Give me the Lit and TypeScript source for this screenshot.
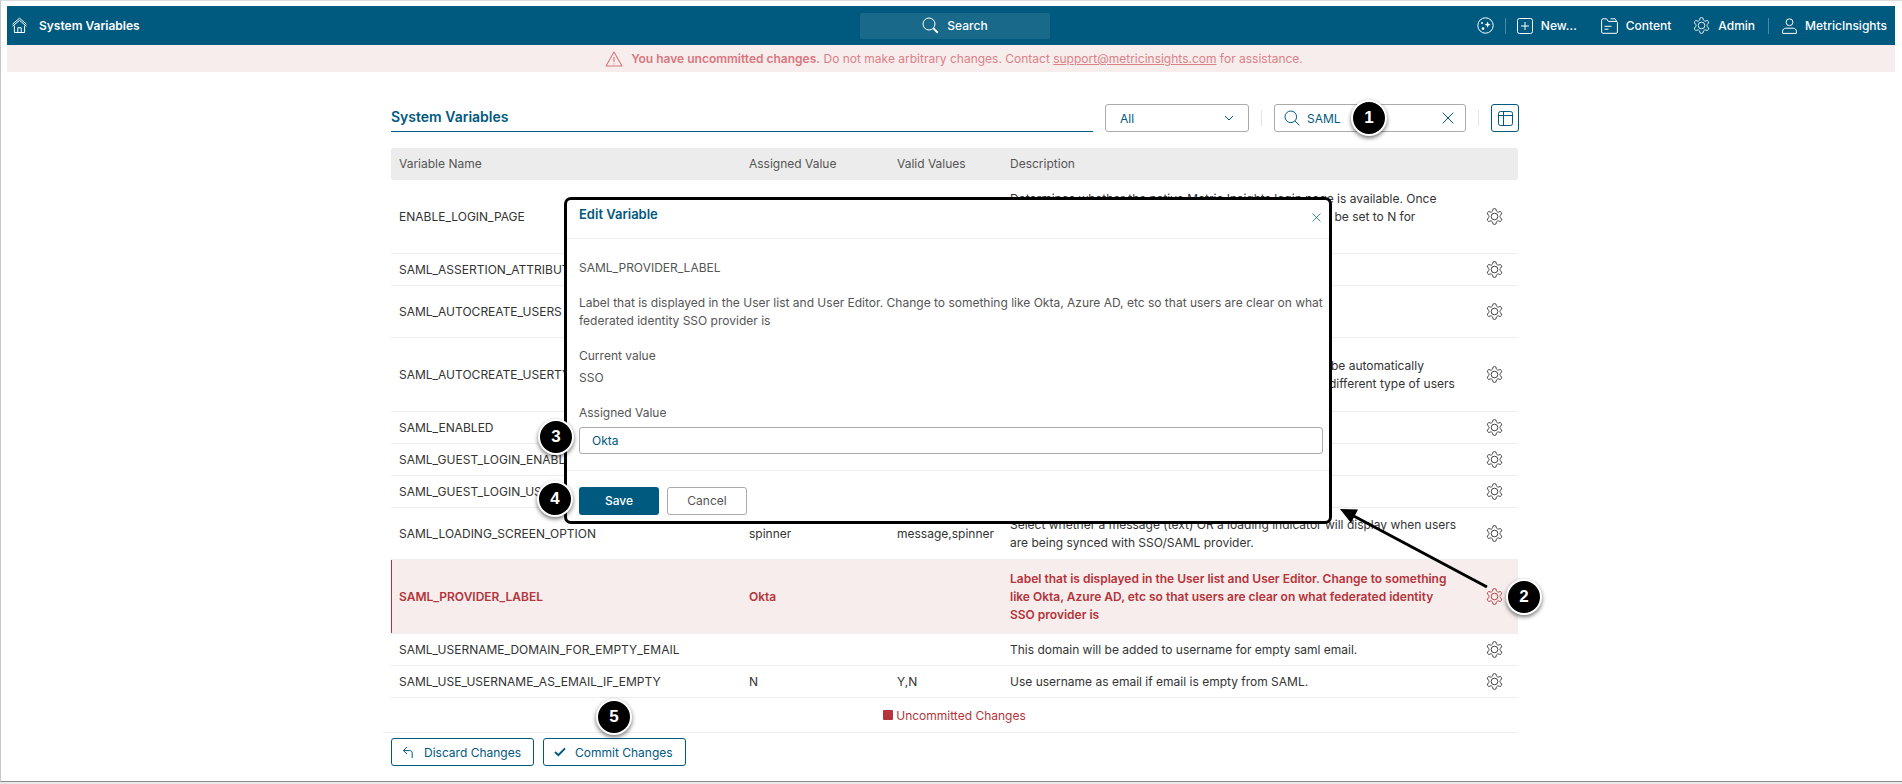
import { LitElement, html, css, svg } from "lit";
import { customElement } from "lit/decorators.js";

const GEAR = "M12.22 2h-.44a2 2 0 0 0-2 2v.18a2 2 0 0 1-1 1.73l-.43.25a2 2 0 0 1-2 0l-.15-.08a2 2 0 0 0-2.73.73l-.22.38a2 2 0 0 0 .73 2.73l.15.1a2 2 0 0 1 1 1.72v.51a2 2 0 0 1-1 1.74l-.15.09a2 2 0 0 0-.73 2.73l.22.38a2 2 0 0 0 2.73.73l.15-.08a2 2 0 0 1 2 0l.43.25a2 2 0 0 1 1 1.73V20a2 2 0 0 0 2 2h.44a2 2 0 0 0 2-2v-.18a2 2 0 0 1 1-1.73l.43-.25a2 2 0 0 1 2 0l.15.08a2 2 0 0 0 2.73-.73l.22-.39a2 2 0 0 0-.73-2.73l-.15-.08a2 2 0 0 1-1-1.74v-.5a2 2 0 0 1 1-1.74l.15-.09a2 2 0 0 0 .73-2.73l-.22-.38a2 2 0 0 0-2.73-.73l-.15.08a2 2 0 0 1-2 0l-.43-.25a2 2 0 0 1-1-1.73V4a2 2 0 0 0-2-2z";

const gear = (size: number, sw = 1.15) => html`<svg width=${size} height=${size} viewBox="0 0 24 24" fill="none" stroke="currentColor" stroke-width=${sw} stroke-linejoin="round"><path d=${GEAR}></path><circle cx="12" cy="12" r="4.2"></circle></svg>`;

const homeIcon = html`<svg width="17" height="17" viewBox="0 0 17 17" fill="none" stroke="#fff" stroke-width="1"><path d="M1.5 7.2 8.5 1.2l7 6"></path><path d="M1.5 9.2 8.5 3.4l7 5.8"></path><path d="M3.4 8.6V15.5h10.2V8.6"></path><path d="M6.8 15.5v-4.8h3.4v4.8"></path></svg>`;
const sparkIcon = html`<svg width="17" height="17" viewBox="0 0 17 17" fill="none" stroke="#fff" stroke-width="1"><circle cx="8.5" cy="8.5" r="7.7"></circle><path fill="#fff" stroke="none" d="M10.6 4.6l.9 2.2 2.1.9-2.1.9-.9 2.2-.9-2.2-2.1-.9 2.1-.9z"></path><circle cx="5" cy="6" r="1" fill="#fff" stroke="none"></circle><circle cx="6" cy="11.6" r="1.3" fill="#fff" stroke="none"></circle></svg>`;
const plusIcon = html`<svg width="16" height="16" viewBox="0 0 16 16" fill="none" stroke="#fff" stroke-width="1"><rect x=".5" y=".5" width="15" height="15" rx="2"></rect><path d="M8 4v8M4 8h8"></path></svg>`;
const folderIcon = html`<svg width="17" height="16" viewBox="0 0 17 16" fill="none" stroke="#fff" stroke-width="1"><path d="M.6 14V2.2c0-.8.6-1.4 1.3-1.4h3.7l1.6 2.6h7.9c.8 0 1.3.6 1.3 1.3V14c0 .7-.5 1.3-1.3 1.3H1.9C1.2 15.3.6 14.7.6 14z"></path><path d="M9.5.8h4.6l1.6 2.6"></path><path d="M3.5 8.3h7M3.5 11.2h4"></path></svg>`;
const userIcon = html`<svg width="15" height="16" viewBox="0 0 15 16" fill="none" stroke="#fff" stroke-width="1"><circle cx="7.5" cy="4.2" r="3.4"></circle><path d="M.6 15.4v-2.2c0-1.7 1.5-3 3.2-3h7.4c1.7 0 3.2 1.3 3.2 3v2.2z"></path></svg>`;
const searchWhite = html`<svg width="17" height="17" viewBox="0 0 17 17" fill="none" stroke="#fff" stroke-width="1"><circle cx="7" cy="7" r="6"></circle><path d="M11.4 11.4l4.4 4.4" stroke-width="2"></path></svg>`;
const warnIcon = html`<svg width="18" height="16" viewBox="0 0 18 16" fill="none" stroke="#d9767d" stroke-width="1.1" stroke-linejoin="round"><path d="M9 1 1 15h16z"></path><path d="M9 6v5M9 12.4v.9"></path></svg>`;
const chevron = html`<svg width="10" height="6" viewBox="0 0 10 6" fill="none" stroke="#00597e" stroke-width="1"><path d="M1 1l4 4 4-4"></path></svg>`;
const searchBlue = html`<svg width="16" height="16" viewBox="0 0 16 16" fill="none" stroke="#00597e" stroke-width="1"><circle cx="6.8" cy="6.8" r="5.8"></circle><path d="M11 11l4.4 4.4"></path></svg>`;
const xIcon = (s: number) => html`<svg width=${s} height=${s} viewBox="0 0 12 12" fill="none" stroke="#00597e" stroke-width="1"><path d="M.7.7l10.6 10.6M11.3.7.7 11.3"></path></svg>`;
const tableIcon = html`<svg width="15" height="15" viewBox="0 0 15 15" fill="none" stroke="#00597e" stroke-width="1"><rect x=".5" y=".5" width="14" height="14" rx="2"></rect><path d="M.5 4.5h14M5.5 .5v14"></path></svg>`;
const backIcon = html`<svg width="13" height="13" viewBox="0 0 13 13" fill="none" stroke="#00597e" stroke-width="1"><path d="M5 1 1.4 4.6 5 8"></path><path d="M1.4 4.6h6.4c1.5 0 2.4 1 2.4 2.4v5"></path></svg>`;
const checkIcon = html`<svg width="12" height="10" viewBox="0 0 13 11" fill="none" stroke="#00597e" stroke-width="2.2"><path d="M1 5.5 4.7 9 12 1.5"></path></svg>`;

interface Row { name: string; value: string; valid: string; desc: string; lines: number; active?: boolean; }

const ROWS: Row[] = [
  { name: "ENABLE_LOGIN_PAGE", value: "", valid: "", desc: "Determines whether the native Metric Insights login page is available. Once SSO has been configured and tested, this parameter can be set to N for all\u00a0users.", lines: 3 },
  { name: "SAML_ASSERTION_ATTRIBUTE_MAP", value: "", valid: "", desc: "", lines: 1 },
  { name: "SAML_AUTOCREATE_USERS", value: "", valid: "", desc: "", lines: 2 },
  { name: "SAML_AUTOCREATE_USERTYPE", value: "", valid: "", desc: "Determines the type of user that all new accounts are to be automatically assigned when using SAML. Use this parameter when a different type of users", lines: 3 },
  { name: "SAML_ENABLED", value: "", valid: "", desc: "", lines: 1 },
  { name: "SAML_GUEST_LOGIN_ENABLED", value: "", valid: "", desc: "", lines: 1 },
  { name: "SAML_GUEST_LOGIN_USER", value: "", valid: "", desc: "", lines: 1 },
  { name: "SAML_LOADING_SCREEN_OPTION", value: "spinner", valid: "message,spinner", desc: "Select whether a message (text) OR a loading indicator will display when users are being synced with SSO/SAML provider.", lines: 2 },
  { name: "SAML_PROVIDER_LABEL", value: "Okta", valid: "", desc: "Label that is displayed in the User list and User Editor. Change to something like Okta, Azure AD, etc so that users are clear on what federated identity SSO provider is", lines: 3, active: true },
  { name: "SAML_USERNAME_DOMAIN_FOR_EMPTY_EMAIL", value: "", valid: "", desc: "This domain will be added to username for empty saml email.", lines: 1 },
  { name: "SAML_USE_USERNAME_AS_EMAIL_IF_EMPTY", value: "N", valid: "Y,N", desc: "Use username as email if email is empty from SAML.", lines: 1 },
];

const CALLOUTS = [
  { n: 1, cls: "c1" }, { n: 2, cls: "c2" }, { n: 3, cls: "c3" }, { n: 4, cls: "c4" }, { n: 5, cls: "c5" },
];

@customElement("app-root")
export class AppRoot extends LitElement {
  static styles = css`
    :host { display: block; position: relative; width: 1902px; height: 784px; overflow: hidden; background: #e9e9e9; font-family: Inter, "Noto Sans", sans-serif; font-size: 12px; color: #333; }
    * { box-sizing: border-box; }
    .frame { height: 782px; background: #fff; border-top: 1px solid #dcdcdc; border-left: 1px solid #c8c8c8; border-bottom: 1px solid #8a8a8a; padding-top: 5px; }
    .topbar { height: 39px; margin: 0 7px 0 6px; background: #00597e; color: #fff; display: grid; grid-template-columns: 853px 190px 1fr; align-items: center; font-weight: 500; }
    .bar-left { display: flex; align-items: center; padding-left: 4px; gap: 11px; font-weight: 600; }
    .bar-search { height: 26px; background: #19698a; border-radius: 2px; display: flex; align-items: center; justify-content: center; gap: 8px; }
    .bar-right { display: flex; align-items: center; justify-content: flex-end; padding-right: 8px; }
    .bar-item { display: flex; align-items: center; gap: 8px; }
    .bar-spark { display: flex; margin-right: 11px; }
    .bar-sep { width: 1px; height: 16px; background: #4b8aa5; }
    .sep-a { margin-right: 11px; }
    .sep-b { margin-right: 13px; }
    .item-new { margin-right: 24px; }
    .item-content { margin-right: 21px; }
    .item-admin { margin-right: 13px; gap: 7px; }
    .banner { height: 27px; margin: 0 7px 0 6px; background: #f7eded; color: #dc8187; display: flex; align-items: center; justify-content: center; gap: 8px; padding-left: 6px; }
    .banner b { font-weight: 600; color: #d9767d; }
    .banner a { color: inherit; text-decoration: underline; }
    main { margin: 32px 0 0 390px; width: 1128px; }
    .toolbar { height: 28px; display: flex; align-items: stretch; }
    .title { width: 702px; border-bottom: 1px solid #00597e; color: #00597e; font-size: 14px; font-weight: 600; line-height: 26px; }
    .field { border: 1px solid #aaa; border-radius: 3px; display: flex; align-items: center; color: #00597e; }
    .select { width: 144px; margin-left: 12px; padding: 0 14px; justify-content: space-between; }
    .search { width: 192px; padding: 0 11px 0 9px; gap: 7px; }
    .search span { flex: 1; }
    .vsep { width: 1px; height: 16px; align-self: center; background: #e4e4e4; margin: 0 12px; }
    .icon-btn { width: 28px; border: 1px solid #00597e; border-radius: 3px; display: flex; align-items: center; justify-content: center; }
    .grid { width: 1127px; display: grid; grid-template-columns: 358px 148px 113px 1fr 48px; align-items: center; }
    .head { margin-top: 16px; height: 32px; padding-bottom: 1px; background: #ececec; border-radius: 2px; color: #555; }
    .grid > :first-child { padding-left: 8px; }
    .row { border-bottom: 1px solid #eee; line-height: 18px; color: #333; }
    .desc { padding-right: 10px; }
    .lines-1 { height: 32px; } .lines-2 { height: 52px; } .lines-3 { height: 74px; }
    .row.active { background: #f7eded; color: #b5333a; font-weight: 600; box-shadow: inset 1px 0 0 #b5333a; }
    .gear { display: flex; justify-content: center; color: #333; }
    .active .gear { color: #b5333a; }
    .cell { white-space: nowrap; overflow: hidden; }
    .legend { width: 1127px; height: 34px; display: flex; align-items: center; justify-content: center; gap: 3px; color: #b5333a; }
    .legend i { width: 10px; height: 10px; background: #b5333a; border-radius: 1px; }
    .actions { margin-left: -8px; width: 1135px; border-top: 1px solid #eee; padding: 5px 0 0 8px; display: flex; gap: 9px; }
    .btn { height: 28px; border: 1px solid #00597e; border-radius: 3px; color: #00597e; display: flex; align-items: center; background: #fff; }
    .discard { width: 143px; padding-left: 10px; gap: 9px; }
    .commit { width: 143px; padding-left: 10px; gap: 9px; }
    .modal { position: absolute; left: 564px; top: 197px; width: 768px; height: 327px; border: 3px solid #000; border-radius: 7px; background: #fff; color: #555; line-height: 18px; }
    .m-head { height: 39px; border-bottom: 1px solid #eee; padding: 5px 8px 0 12px; display: flex; justify-content: space-between; }
    .m-title { color: #00597e; font-size: 13px; font-weight: 600; }
    .m-close { margin: 4px 0 0; }
    .m-body { padding: 0 6px 0 12px; }
    .m-name { margin-top: 20px; }
    .m-desc, .m-cur, .m-assign { margin-top: 17px; }
    .m-val { margin-top: 4px; }
    .m-input { margin-top: 5px; height: 27px; border: 1px solid #aaa; border-radius: 3px; color: #00597e; padding-left: 12px; display: flex; align-items: center; }
    .m-foot { margin-top: 16px; border-top: 1px solid #eee; padding: 16px 12px 0; display: flex; gap: 8px; }
    .m-btn { width: 80px; height: 28px; border-radius: 3px; display: flex; align-items: center; justify-content: center; }
    .save { background: #00597e; color: #fff; font-weight: 500; }
    .cancel { border: 1px solid #aaa; color: #555; }
    .arrow { position: absolute; left: 0; top: 0; pointer-events: none; }
    .callout { position: absolute; width: 36px; height: 36px; border-radius: 50%; background: #000; border: 2px solid #fff; box-shadow: 0 2px 4px rgba(0,0,0,.55); color: #fff; display: flex; align-items: center; justify-content: center; font-family: "Liberation Sans", Arial, sans-serif; font-weight: 700; font-size: 17px; }
    .c1 { left: 1351px; top: 100px; }
    .c2 { left: 1506px; top: 579px; }
    .c3 { left: 538px; top: 419px; }
    .c4 { left: 537px; top: 481px; }
    .c5 { left: 596px; top: 699px; }
  `;

  private renderRow(r: Row) {
    return html`<div class="grid row lines-${r.lines} ${r.active ? "active" : ""}">
      <div class="cell">${r.name}</div>
      <div class="cell">${r.value}</div>
      <div class="cell">${r.valid}</div>
      <div class="desc">${r.desc}</div>
      <div class="gear">${gear(19)}</div>
    </div>`;
  }

  render() {
    return html`
      <div class="frame">
        <header class="topbar">
          <div class="bar-left">${homeIcon}<span>System Variables</span></div>
          <div class="bar-search">${searchWhite}<span>Search</span></div>
          <div class="bar-right">
            <span class="bar-spark">${sparkIcon}</span>
            <span class="bar-sep sep-a"></span>
            <span class="bar-item item-new">${plusIcon}<span>New...</span></span>
            <span class="bar-item item-content">${folderIcon}<span>Content</span></span>
            <span class="bar-item item-admin">${gear(19)}<span>Admin</span></span>
            <span class="bar-sep sep-b"></span>
            <span class="bar-item">${userIcon}<span>MetricInsights</span></span>
          </div>
        </header>
        <div class="banner">${warnIcon}<span><b>You have uncommitted changes.</b> Do not make arbitrary changes. Contact <a>support@metricinsights.com</a> for assistance.</span></div>
        <main>
          <div class="toolbar">
            <div class="title">System Variables</div>
            <div class="field select"><span>All</span>${chevron}</div>
            <div class="vsep"></div>
            <div class="field search">${searchBlue}<span>SAML</span>${xIcon(12)}</div>
            <div class="vsep"></div>
            <div class="icon-btn">${tableIcon}</div>
          </div>
          <div class="grid head"><div>Variable Name</div><div>Assigned Value</div><div>Valid Values</div><div>Description</div><div></div></div>
          ${ROWS.map((r) => this.renderRow(r))}
          <div class="legend"><i></i><span>Uncommitted Changes</span></div>
          <div class="actions">
            <div class="btn discard">${backIcon}<span>Discard Changes</span></div>
            <div class="btn commit">${checkIcon}<span>Commit Changes</span></div>
          </div>
        </main>
      </div>
      <div class="modal">
        <div class="m-head"><span class="m-title">Edit Variable</span><span class="m-close">${xIcon(9)}</span></div>
        <div class="m-body">
          <div class="m-name">SAML_PROVIDER_LABEL</div>
          <div class="m-desc">Label that is displayed in the User list and User Editor. Change to something like Okta, Azure AD, etc so that users are clear on what federated identity SSO provider is</div>
          <div class="m-cur">Current value</div>
          <div class="m-val">SSO</div>
          <div class="m-assign">Assigned Value</div>
          <div class="m-input">Okta</div>
        </div>
        <div class="m-foot"><div class="m-btn save">Save</div><div class="m-btn cancel">Cancel</div></div>
      </div>
      <svg class="arrow" width="1902" height="784" viewBox="0 0 1902 784">
        ${svg`<path d="M1487 587 1350 514" stroke="#000" stroke-width="3" fill="none"></path><path d="M1340 509 1358 509.500 1351 523z" fill="#000"></path>`}
      </svg>
      ${CALLOUTS.map((c) => html`<div class="callout ${c.cls}">${c.n}</div>`)}
    `;
  }
}
